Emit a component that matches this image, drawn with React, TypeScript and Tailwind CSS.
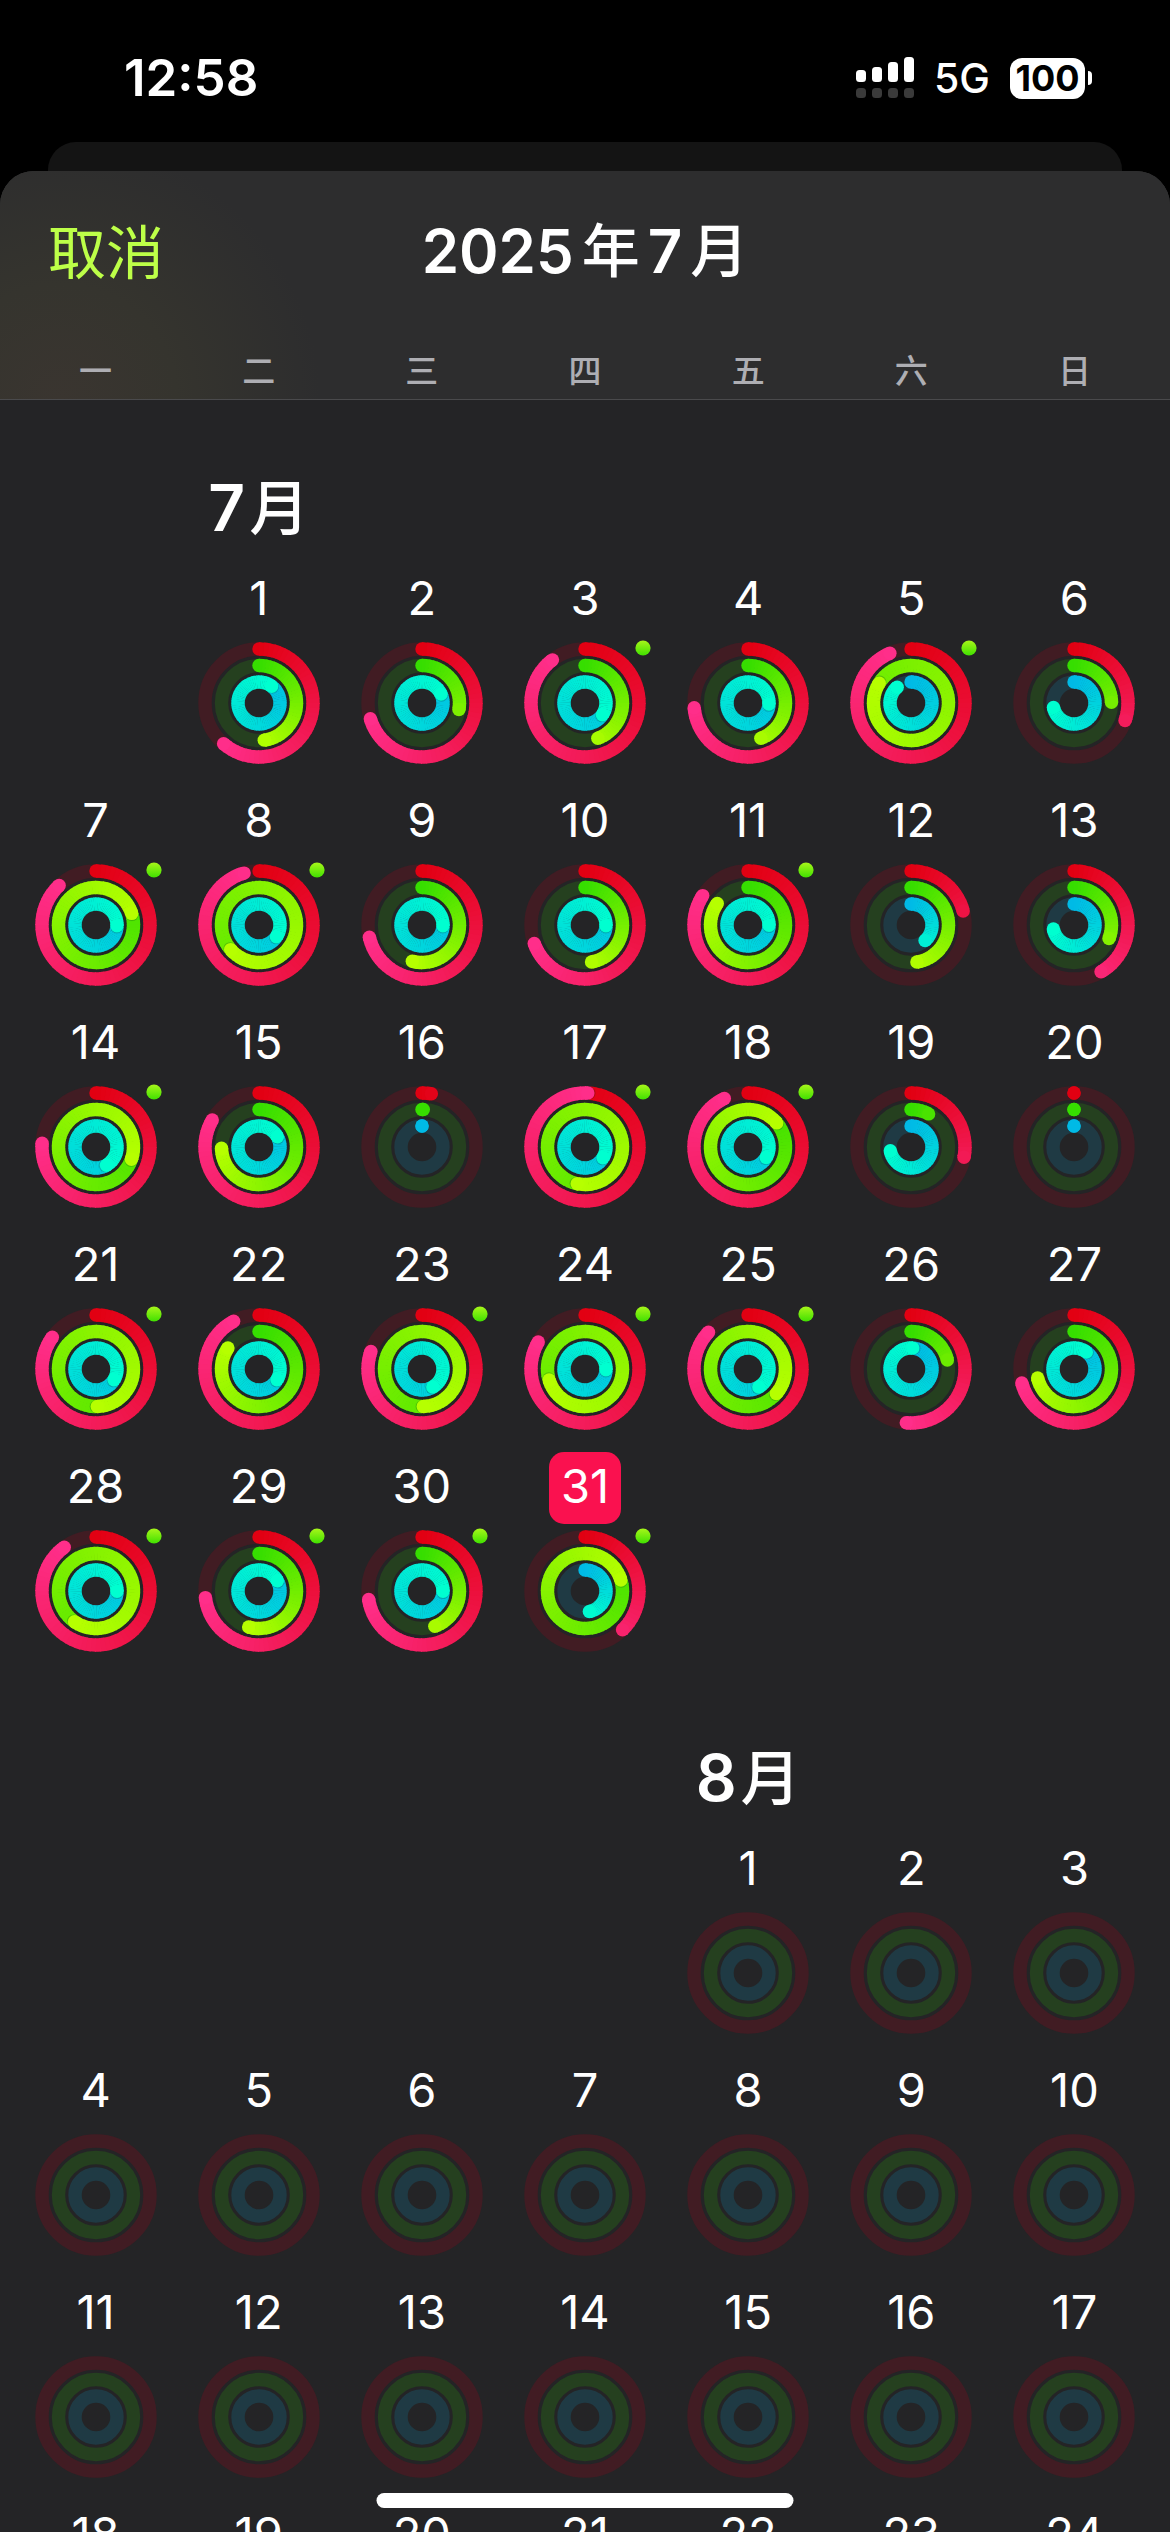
type Rgb = [number, number, number];
type RingSpec = { radius: number; track: string; from: Rgb; to: Rgb };
type Angles = [number, number, number];
type Day = { day: number; angles?: Angles; workout?: boolean; today?: boolean };

const STROKE = 13.4;
const CENTER = 61;

const RINGS: RingSpec[] = [
  { radius: 54, track: "#411c23", from: [226, 0, 18], to: [255, 46, 138] },
  { radius: 37.5, track: "#25401f", from: [54, 222, 0], to: [182, 255, 0] },
  { radius: 21, track: "#1f3a44", from: [0, 186, 230], to: [0, 255, 208] },
];

const WEEKDAYS = ["一", "二", "三", "四", "五", "六", "日"];

// Move, exercise and stand progress in degrees; anything above 360 laps its own start.
const JULY: Day[] = [
  { day: 1, angles: [221, 172, 397] },
  { day: 2, angles: [253, 100, 425] },
  { day: 3, angles: [323, 160, 484], workout: true },
  { day: 4, angles: [265, 160, 453] },
  { day: 5, angles: [337, 662, 319], workout: true },
  { day: 6, angles: [109, 89, 258] },
  { day: 7, angles: [317, 432, 452], workout: true },
  { day: 8, angles: [344, 589, 484], workout: true },
  { day: 9, angles: [257, 195, 452] },
  { day: 10, angles: [250, 170, 452] },
  { day: 11, angles: [303, 305, 451], workout: true },
  { day: 12, angles: [75, 171, 138] },
  { day: 13, angles: [150, 111, 259] },
  { day: 14, angles: [274, 469, 510], workout: true },
  { day: 15, angles: [300, 268, 421] },
  { day: 16, angles: [10, 2, 0] },
  { day: 17, angles: [363, 552, 481], workout: true },
  { day: 18, angles: [334, 410, 480], workout: true },
  { day: 19, angles: [101, 28, 260] },
  { day: 20, angles: [0, 0, 0] },
  { day: 21, angles: [306, 538, 481], workout: true },
  { day: 22, angles: [332, 304, 481] },
  { day: 23, angles: [289, 538, 509], workout: true },
  { day: 24, angles: [300, 613, 452], workout: true },
  { day: 25, angles: [313, 491, 509], workout: true },
  { day: 26, angles: [185, 76, 365] },
  { day: 27, angles: [255, 256, 396] },
  { day: 28, angles: [324, 575, 451], workout: true },
  { day: 29, angles: [263, 196, 421], workout: true },
  { day: 30, angles: [261, 160, 451], workout: true },
  { day: 31, angles: [136, 433, 168], workout: true, today: true },
];

const AUGUST: Day[] = Array.from({ length: 31 }, (_, i) => ({ day: i + 1 }));

function polar(radius: number, degrees: number) {
  const a = ((degrees - 90) * Math.PI) / 180;
  return { x: CENTER + radius * Math.cos(a), y: CENTER + radius * Math.sin(a) };
}

function mix(from: Rgb, to: Rgb, t: number) {
  const c = from.map((v, i) => Math.round(v + (to[i] - v) * t));
  return `rgb(${c[0]}, ${c[1]}, ${c[2]})`;
}

function Arc({ spec, total }: { spec: RingSpec; total: number }) {
  const span = Math.max(total, 180);
  const laps = total > 360;
  const first = laps ? total - 358 : 0;
  const step = 5;
  const colorAt = (deg: number) => mix(spec.from, spec.to, Math.min(1, deg / span));

  const segment = (start: number) => {
    const end = Math.min(start + step, total);
    const a = polar(spec.radius, start);
    const b = polar(spec.radius, Math.min(end + 1, total));
    return (
      <path
        key={start}
        d={`M${a.x.toFixed(2)} ${a.y.toFixed(2)}A${spec.radius} ${spec.radius} 0 0 1 ${b.x.toFixed(2)} ${b.y.toFixed(2)}`}
        stroke={colorAt((start + end) / 2)}
        strokeWidth={STROKE}
        fill="none"
      />
    );
  };

  const starts: number[] = [];
  for (let s = first; s < total; s += step) starts.push(s);
  const split = laps ? Math.max(0, starts.length - 10) : 0;
  const head = polar(spec.radius, first);
  const tip = polar(spec.radius, total);
  const shadow = polar(spec.radius, total + 70 / spec.radius);

  return (
    <g>
      {!laps && <circle cx={head.x} cy={head.y} r={STROKE / 2} fill={colorAt(0)} />}
      {laps && starts.slice(0, split).map(segment)}
      {laps && <circle cx={shadow.x} cy={shadow.y} r={STROKE / 2 - 0.2} fill="#003018" fillOpacity={0.22} />}
      {starts.slice(split).map(segment)}
      <circle cx={tip.x} cy={tip.y} r={STROKE / 2} fill={colorAt(total)} />
    </g>
  );
}

function ActivityRings({ angles, workout }: { angles?: Angles; workout?: boolean }) {
  return (
    <svg viewBox="0 0 122 122" className="size-[122px] shrink-0 overflow-visible" aria-hidden="true">
      {RINGS.map((spec) => (
        <circle
          key={spec.radius}
          cx={CENTER}
          cy={CENTER}
          r={spec.radius}
          fill="none"
          stroke={spec.track}
          strokeWidth={STROKE}
        />
      ))}
      {angles && RINGS.map((spec, i) => <Arc key={spec.radius} spec={spec} total={angles[i]} />)}
      {workout && <circle cx="119" cy="6" r="7.6" fill="url(#workout-dot)" />}
    </svg>
  );
}

const COL_START = ["", "col-start-1", "col-start-2", "col-start-3", "col-start-4", "col-start-5", "col-start-6", "col-start-7"];

function DayCell({ data, column }: { data: Day; column: number }) {
  return (
    <button type="button" className={`flex flex-col items-center gap-1.5 pb-[22px] ${COL_START[column]}`}>
      <span
        className={`flex size-[72px] items-center justify-center rounded-[15px] pb-1.5 text-[47px] leading-none ${
          data.today ? "bg-[#fa114f]" : ""
        }`}
      >
        {data.day}
      </span>
      <ActivityRings angles={data.angles} workout={data.workout} />
    </button>
  );
}

function Month({ month, offset, days }: { month: number; offset: number; days: Day[] }) {
  return (
    <section className="grid grid-cols-7 px-3.5 pt-16">
      <h2
        className={`mb-4 flex h-20 items-center justify-center gap-1 text-[64px] leading-none font-semibold whitespace-nowrap ${COL_START[offset]}`}
      >
        <span>{month}</span>
        <span className="text-[60px] font-medium">月</span>
      </h2>
      <div className="col-span-7 grid grid-cols-7">
        {days.map((d) => (
          <DayCell key={d.day} data={d} column={((offset - 1 + d.day - 1) % 7) + 1} />
        ))}
      </div>
    </section>
  );
}

function StatusBar() {
  return (
    <div className="flex h-[142px] shrink-0 items-start justify-between pt-[52px] pr-[78px] pl-[124px]">
      <span className="text-[51px] leading-[52px] font-semibold">12:58</span>
      <div className="flex h-[52px] items-center gap-5">
        <svg viewBox="0 0 58 42" className="h-[42px] w-[58px]" role="img" aria-label="信号">
          <g fill="#fff">
            <rect x="0" y="13" width="10" height="12" rx="3.5" />
            <rect x="16" y="10" width="10" height="15" rx="3.5" />
            <rect x="32" y="5" width="10" height="20" rx="3.5" />
            <rect x="48" y="0" width="10" height="25" rx="3.5" />
          </g>
          <g fill="#3a3a3a">
            <rect x="0" y="31" width="10" height="10" rx="3.5" />
            <rect x="16" y="31" width="10" height="10" rx="3.5" />
            <rect x="32" y="31" width="10" height="10" rx="3.5" />
            <rect x="48" y="31" width="10" height="10" rx="3.5" />
          </g>
        </svg>
        <span className="text-[41px] leading-none font-medium">5G</span>
        <div className="flex items-center gap-[3px]">
          <span className="flex h-[41px] w-[75px] items-center justify-center rounded-xl bg-white text-[36px] leading-none font-bold text-black">
            100
          </span>
          <span className="h-3.5 w-1 rounded-r-full bg-white" />
        </div>
      </div>
    </div>
  );
}

export default function App() {
  return (
    <div className="relative flex h-screen flex-col overflow-hidden bg-black font-['Inter','Noto_Sans_CJK_SC',sans-serif] text-white">
      <svg className="absolute size-0" aria-hidden="true">
        <defs>
          <linearGradient id="workout-dot" x1="0" y1="0" x2="0" y2="1">
            <stop offset="0" stopColor="#a8f61a" />
            <stop offset="1" stopColor="#3fe000" />
          </linearGradient>
        </defs>
      </svg>

      <StatusBar />
      <div className="mx-12 h-[29px] shrink-0 rounded-t-[28px] bg-[#141414]" />

      <main className="flex min-h-0 flex-1 flex-col overflow-hidden rounded-t-[34px] bg-[#242426]">
        <header className="shrink-0 border-b border-[#4a4a4c] bg-[#2d2d2e] bg-[radial-gradient(ellipse_260px_260px_at_60px_230px,#3a3530_0%,#35342e_45%,#2d2d2e_100%)]">
          <div className="grid h-40 grid-cols-[1fr_auto_1fr] items-center px-12">
            <button type="button" className="justify-self-start pt-1 text-[58px] leading-none text-[#bdff48]">
              取消
            </button>
            <h1 className="flex items-center gap-2 text-[60px] leading-none font-semibold">
              <span>2025</span>
              <span className="text-[58px] font-medium">年</span>
              <span>7</span>
              <span className="text-[58px] font-medium">月</span>
            </h1>
          </div>
          <div className="grid grid-cols-7 px-3.5 pt-5 pb-2 text-center text-[33px] leading-10 font-medium text-[#aeaeb3]">
            {WEEKDAYS.map((w) => (
              <span key={w}>{w}</span>
            ))}
          </div>
        </header>

        <div className="min-h-0 flex-1 overflow-y-auto pt-1 [scrollbar-width:none]">
          <Month month={7} offset={2} days={JULY} />
          <Month month={8} offset={5} days={AUGUST} />
        </div>
      </main>

      <div className="absolute bottom-6 left-1/2 h-[15px] w-[417px] -translate-x-1/2 rounded-full bg-white" />
    </div>
  );
}
